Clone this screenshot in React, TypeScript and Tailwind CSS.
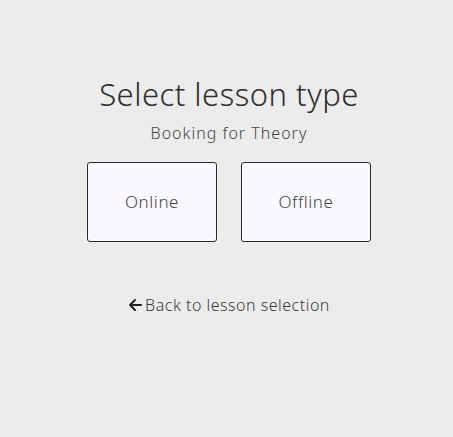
export default function App() {
  return (
    <div className="min-h-[437px] w-full bg-[#ececec] pl-[5px] text-center" style={{ fontFamily: '"Noto Sans", sans-serif' }}>
      <div className="flex flex-col items-center pt-[74px]">
        <h1 className="text-[31px] leading-[40px] font-light text-[#2e2e2e] tracking-[0.5px]">Select lesson type</h1>
        <p className="mt-[8px] text-[16px] leading-[22px] font-light text-[#444] tracking-[1px]">Booking for Theory</p>
        <div className="mt-[18px] flex gap-[24px]">
          <button className="w-[130px] h-[80px] rounded-[3px] border border-[#2a2a2a] bg-[#fbf9ff] text-[17px] font-light text-[#444] tracking-[0.6px]">Online</button>
          <button className="w-[130px] h-[80px] rounded-[3px] border border-[#2a2a2a] bg-[#fbf9ff] text-[17px] font-light text-[#444] tracking-[0.6px]">Offline</button>
        </div>
        <a className="mt-[51px] flex items-center text-[16px] font-light text-[#3a3a3a] tracking-[0.5px]">
          <svg width="15" height="14" viewBox="0 0 15 14" className="mr-[2px]" fill="none" stroke="#222" strokeWidth="2" strokeLinecap="round" strokeLinejoin="round">
            <path d="M13 7H2M7 2L2 7l5 5" />
          </svg>
          Back to lesson selection
        </a>
      </div>
    </div>
  );
}
